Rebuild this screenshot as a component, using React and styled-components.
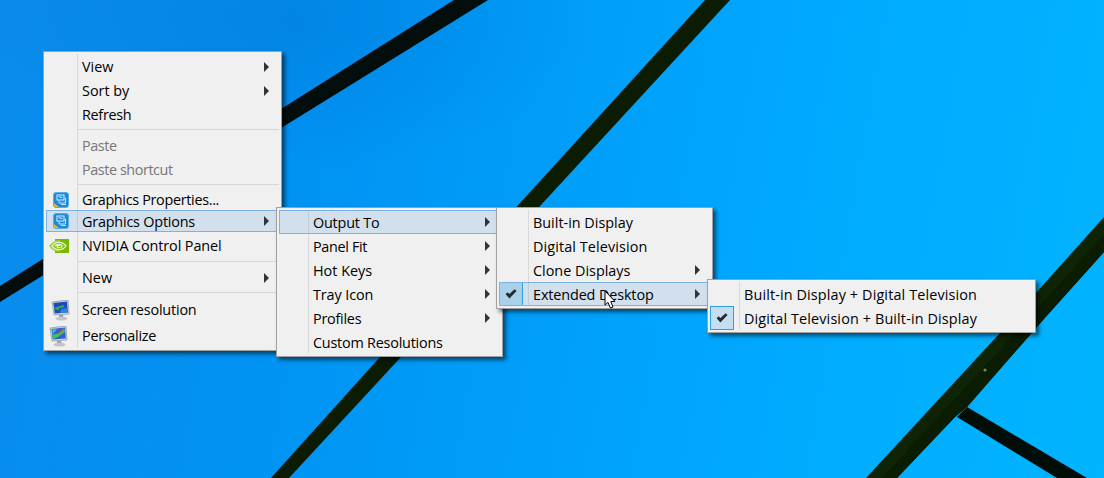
import React from "react";
import styled, { createGlobalStyle } from "styled-components";

const Global = createGlobalStyle`
  html, body { margin: 0; padding: 0; width: 1104px; height: 478px; overflow: hidden; }
  body { font-family: "Open Sans", "Noto Sans", sans-serif; }
`;

const Desktop = styled.div`
  position: relative;
  width: 1104px;
  height: 478px;
  overflow: hidden;
  background:
    radial-gradient(ellipse 300px 150px at 290px 20px, rgba(0, 70, 170, 0.18), rgba(0, 70, 170, 0) 100%),
    linear-gradient(100deg, #0a8bec 0%, #0094f3 30%, #00a1fb 55%, #00acff 75%, #00b4ff 100%);
`;

const Wallpaper = styled.svg`
  position: absolute;
  inset: 0;
  width: 1104px;
  height: 478px;
`;

const Menu = styled.div`
  position: absolute;
  left: ${(p) => p.$x}px;
  top: ${(p) => p.$y}px;
  width: ${(p) => p.$w}px;
  box-sizing: border-box;
  border: 1px solid #a0a0a0;
  padding: ${(p) => p.$top}px 2px ${(p) => p.$bottom}px;
  display: flex;
  flex-direction: column;
  background:
    linear-gradient(#d9d9d9, #d9d9d9) no-repeat ${(p) => p.$gutter + 2}px 2px / 1px calc(100% - 4px),
    #f0f0f0;
  box-shadow: 3px 3px 4px rgba(0, 0, 0, 0.55);
`;

const Row = styled.div`
  display: flex;
  align-items: center;
  box-sizing: border-box;
  height: ${(p) => p.$h || 24}px;
  color: ${(p) => (p.$disabled ? "#777777" : "#000000")};
  font-size: 14.4px;
  line-height: 20px;
  white-space: nowrap;
  background: ${(p) => (p.$active ? "rgba(80, 155, 225, 0.19)" : "transparent")};
  outline: ${(p) => (p.$active ? "1px solid #7db2e6" : "none")};
  outline-offset: -1px;
`;

const IconCell = styled.span`
  flex: 0 0 ${(p) => p.$w}px;
  width: ${(p) => p.$w}px;
  height: 100%;
  display: flex;
  align-items: center;
  justify-content: flex-start;
  box-sizing: border-box;
`;

const Glyph = styled.span`
  display: flex;
  margin-left: ${(p) => p.$left}px;
`;

const CheckBox = styled.span`
  width: 24px;
  height: 24px;
  box-sizing: border-box;
  display: flex;
  align-items: center;
  justify-content: center;
  border: 1px solid #2f9fe0;
  background: ${(p) => (p.$active ? "#a8d1ec" : "#c3e0f2")};
`;

const Label = styled.span`
  flex: 1;
  padding-left: 5px;
  padding-top: ${(p) => p.$drop}px;
  letter-spacing: ${(p) => p.$ls || 0}px;
`;

const Arrow = styled.span`
  width: 0;
  height: 0;
  margin-right: 10px;
  border-style: solid;
  border-width: 5px 0 5px 5px;
  border-color: transparent transparent transparent #333333;
`;

const Separator = styled.div`
  height: 1px;
  margin: 2px 0 ${(p) => p.$after}px ${(p) => p.$gutter + 1}px;
  background: #d7d7d7;
`;

const Cursor = styled.svg`
  position: absolute;
  left: 604px;
  top: 290px;
`;

const CheckMark = () => (
  <svg width="12" height="10" viewBox="0 0 12 10">
    <path d="M0.6 5.2 L2.6 3.2 L4.4 5.1 L9.6 0.2 L11.6 2.1 L4.4 9.6 Z" fill="#2a2a2a" />
  </svg>
);

const IntelIcon = () => (
  <svg width="16" height="16" viewBox="0 0 16 16">
    <rect x="0.5" y="0.5" width="15" height="15" rx="2.5" fill="#1c8ad6" stroke="#58aee0" />
    <path d="M1 11 L1 13.5 Q1 15 2.5 15 L6 15 Z" fill="#e8b534" />
    <rect x="4" y="3" width="7" height="5" fill="none" stroke="#d6eefb" strokeWidth="1" />
    <path d="M6 8.5 V11 H12.5 V6 H11.5 M7.5 5.5 H9.5 M5.5 4.8 H8 M8 12.5 H13" fill="none" stroke="#bfe4f8" strokeWidth="1" />
  </svg>
);

const NvidiaIcon = () => (
  <svg width="20" height="14" viewBox="0 0 20 14">
    <rect x="6" y="0" width="14" height="14" fill="#76b900" />
    <path d="M0 7 C3 2.5 7 1 11 1.6 L11 3.2 C7.5 3 5 4.4 3.2 7 C5 9.5 7.5 10.8 11 10.8 L11 12.4 C7 13 3 11.5 0 7 Z" fill="#a9d545" />
    <path d="M3.2 7 C5 4.4 7.5 3 11 3.2 C14 3.6 16 5.4 17 7 C15 9.6 13 10.8 11 10.8 C8 10.8 5 9.5 3.2 7 Z" fill="#7fbf10" stroke="#f4fae6" strokeWidth="1.1" />
    <path d="M6 7 C7.5 5.4 9.5 5 11 5.4 C12.4 5.8 13 6.5 13.4 7 C12.6 8.2 11.4 8.8 10.4 8.8 C9 8.8 8 8 8 7 C9 6.2 10 6.2 10.8 6.8" fill="none" stroke="#f4fae6" strokeWidth="1.1" />
  </svg>
);

const MonitorIcon = ({ variant }) => (
  <svg width="19" height="21" viewBox="0 0 19 21">
    <path d="M1 2 L17 0 L18 14 L3 15 Z" fill="#d4d9de" stroke="#8b9198" strokeWidth="0.7" />
    <path d="M2.4 3 L16 1.4 L16.8 12.6 L3.8 13.6 Z" fill={variant ? "#2a62d8" : "#1b46c4"} />
    {variant ? (
      <>
        <path d="M3 9 L10 7 L15 2 L16 6 L9 11 L4 13 Z" fill="#3cc455" />
        <path d="M9 8 L15 2.5" stroke="#e0502f" strokeWidth="1.2" />
        <path d="M3 3.5 L8 3 L4 8 Z" fill="#46b9e8" />
      </>
    ) : (
      <>
        <path d="M3 8 L7 6.4 L13 5 L13.4 7 L8 8.4 L8 10.4 L4 9 Z" fill="#2fb04a" />
        <path d="M10 9 L16.4 8 L16.6 12.4 L9 13 Z" fill="#2e86dc" />
      </>
    )}
    <path d="M8 15 L12 15 L12.5 17 L8 17.4 Z" fill="#9aa0a6" />
    <ellipse cx="10.5" cy="18.6" rx="6" ry="2" fill="#c2c5c8" />
  </svg>
);

const main = [
  { t: "View", arrow: 1 },
  { t: "Sort by", arrow: 1 },
  { t: "Refresh", ls: -0.3 },
  { sep: 1, after: 4 },
  { t: "Paste", disabled: 1, ls: -0.4 },
  { t: "Paste shortcut", disabled: 1, ls: -0.43 },
  { sep: 1, after: 4 },
  { t: "Graphics Properties...", h: 21, icon: <IntelIcon />, left: 7, ls: -0.32 },
  { t: "Graphics Options", h: 22, icon: <IntelIcon />, left: 7, arrow: 1, active: 1, ls: -0.2, drop: 2 },
  { t: "NVIDIA Control Panel", h: 27, icon: <NvidiaIcon />, left: 3, ls: -0.1 },
  { sep: 1, after: 4 },
  { t: "New", arrow: 1 },
  { sep: 1, after: 4 },
  { t: "Screen resolution", h: 26, icon: <MonitorIcon />, left: 5, ls: -0.18 },
  { t: "Personalize", h: 26, icon: <MonitorIcon variant />, left: 3, ls: -0.27 },
];

const outputs = [
  { t: "Output To", arrow: 1, active: 1, ls: -0.2 },
  { t: "Panel Fit", arrow: 1, ls: -0.33 },
  { t: "Hot Keys", arrow: 1 },
  { t: "Tray Icon", arrow: 1, ls: -0.1 },
  { t: "Profiles", arrow: 1, ls: -0.25 },
  { t: "Custom Resolutions", ls: -0.22 },
];

const displays = [
  { t: "Built-in Display" },
  { t: "Digital Television", ls: 0.1 },
  { t: "Clone Displays", arrow: 1 },
  { t: "Extended Desktop", arrow: 1, active: 1, check: 1, ls: -0.12 },
];

const extended = [
  { t: "Built-in Display + Digital Television", ls: 0.13 },
  { t: "Digital Television + Built-in Display", check: 1, ls: 0.13 },
];

const ContextMenu = ({ items, x, y, w, gutter, top = 2, bottom = 2, drop = 2 }) => (
  <Menu $x={x} $y={y} $w={w} $gutter={gutter} $top={top} $bottom={bottom}>
    {items.map((it, i) =>
      it.sep ? (
        <Separator key={i} $gutter={gutter} $after={it.after} />
      ) : (
        <Row key={i} $h={it.h} $active={it.active} $disabled={it.disabled}>
          <IconCell $w={gutter}>
            {it.icon && <Glyph $left={it.left}>{it.icon}</Glyph>}
            {it.check && (
              <CheckBox $active={it.active}>
                <CheckMark />
              </CheckBox>
            )}
          </IconCell>
          <Label $ls={it.ls} $drop={it.drop ?? drop}>{it.t}</Label>
          {it.arrow && <Arrow />}
        </Row>
      )
    )}
  </Menu>
);

export default function App() {
  return (
    <Desktop>
      <Global />
      <Wallpaper viewBox="0 0 1104 478">
        <polygon points="454,0 488,0 0,302 0,286" fill="#020d0c" />
        <polygon points="705,0 730,0 552,193 401,357 289,478 271,478 380,357 552,168" fill="#0b1c03" />
        <polygon points="957,417 967,407 1087,478 1057,478" fill="#010e08" />
        <polygon points="866,478 1000,333 1104,217 1104,252 1043,320 967,407 955,417 897,478" fill="#0f2405" />
        <polygon points="882,478 1022,326 1104,234 1104,252 1043,320 967,407 955,417 897,478" fill="#0a1c02" />
        <circle cx="985" cy="370" r="1.6" fill="#6f8a55" />
      </Wallpaper>
      <ContextMenu items={main} x={43} y={51} w={239} gutter={31} top={3} bottom={1} drop={0} />
      <ContextMenu items={outputs} x={276} y={207} w={227} gutter={29} />
      <ContextMenu items={displays} x={496} y={207} w={217} gutter={29} />
      <ContextMenu items={extended} x={707} y={279} w={329} gutter={29} />
      <Cursor width="13" height="20" viewBox="0 0 13 20">
        <path d="M1 1 L1 15 L4 12.4 L6.4 18 L9 17 L6.8 11.6 L11 11.4 Z" fill="#ffffff" stroke="#000000" strokeWidth="1" />
      </Cursor>
    </Desktop>
  );
}
